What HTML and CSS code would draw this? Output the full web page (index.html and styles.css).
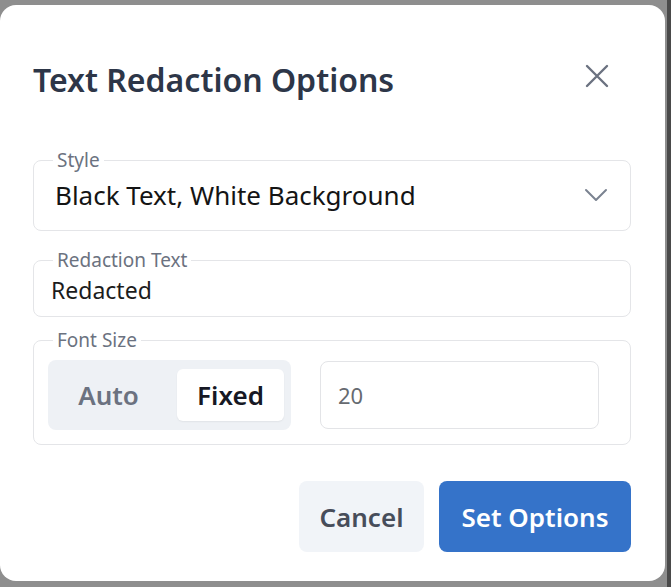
FILE: index.html
```html
<!DOCTYPE html>
<html>
<head>
<meta charset="utf-8">
<link rel="stylesheet" href="styles.css">
</head>
<body>
<div class="dialog">
  <div class="header">
    <h1 class="title">Text Redaction Options</h1>
    <button class="close" aria-label="Close">
      <svg width="24" height="24" viewBox="0 0 24 24"><path d="M2 2 L22 22 M22 2 L2 22" stroke="#6b7280" stroke-width="2.4" stroke-linecap="round" fill="none"/></svg>
    </button>
  </div>
  <fieldset class="field field-style">
    <legend>Style</legend>
    <div class="select-row">
      <span class="select-value">Black Text, White Background</span>
      <svg class="chev" width="24" height="14" viewBox="0 0 24 14"><path d="M2 2 L12 12 L22 2" stroke="#7b8391" stroke-width="2" stroke-linecap="round" stroke-linejoin="round" fill="none"/></svg>
    </div>
  </fieldset>
  <fieldset class="field field-text">
    <legend>Redaction Text</legend>
    <div class="text-value">Redacted</div>
  </fieldset>
  <fieldset class="field field-size">
    <legend>Font Size</legend>
    <div class="size-row">
      <div class="segmented">
        <div class="seg">Auto</div>
        <div class="seg seg-active">Fixed</div>
      </div>
      <div class="num-input">20</div>
    </div>
  </fieldset>
  <div class="actions">
    <button class="btn btn-cancel">Cancel</button>
    <button class="btn btn-primary">Set Options</button>
  </div>
</div>
</body>
</html>
```

FILE: styles.css
```css
html, body {
  margin: 0;
  padding: 0;
}
body {
  width: 671px;
  height: 587px;
  overflow: hidden;
  background: linear-gradient(to right, #8e8e8e 0, #8e8e8e 667px, #4a4a4a 667px);
  font-family: "Noto Sans", "Open Sans", sans-serif;
  padding-top: 5px;
  box-sizing: border-box;
}
.dialog {
  width: 665px;
  height: 576px;
  box-sizing: border-box;
  background: #ffffff;
  border-radius: 16px;
  padding: 55px 34px 0 33px;
  display: flex;
  flex-direction: column;
}
.header {
  display: flex;
  align-items: center;
  justify-content: space-between;
  height: 40px;
  margin-bottom: 50px;
}
.title {
  margin: 0;
  font-size: 32px;
  line-height: 40px;
  font-weight: 600;
  color: #2d3648;
  letter-spacing: 0;
}
.close {
  border: none;
  background: none;
  padding: 0;
  width: 24px;
  height: 24px;
  margin-right: 22px;
  margin-top: -8px;
  display: flex;
}
.field {
  margin: 0;
  border: 1px solid #e4e5e8;
  border-radius: 8px;
  padding: 0 20px 0 20px;
  min-width: 0;
}
.field legend {
  padding: 0 4px;
  font-size: 19px;
  line-height: 20px;
  color: #6b7280;
}
.field-style {
  height: 81px;
  box-sizing: border-box;
  padding-left: 21px;
  padding-right: 22px;
}
.field-style legend {
  margin-left: -2px;
}
.select-row {
  display: flex;
  align-items: center;
  justify-content: space-between;
  height: 50px;
}
.select-value {
  font-size: 26px;
  color: #141414;
  line-height: 32px;
}
.field-text {
  margin-top: 19px;
  height: 67px;
  box-sizing: border-box;
  padding-left: 17px;
}
.field-text legend {
  margin-left: 2px;
}
.text-value {
  font-size: 23px;
  line-height: 30px;
  color: #1c1c1c;
  padding-top: 5px;
}
.field-size {
  margin-top: 13px;
  height: 115px;
  box-sizing: border-box;
  padding: 0 31px 0 14px;
}
.field-size legend {
  margin-left: 5px;
}
.size-row {
  display: flex;
  gap: 29px;
  padding-top: 10px;
}
.segmented {
  display: flex;
  gap: 15px;
  padding: 9px 7px;
  background: #eef1f5;
  border-radius: 8px;
  width: 243px;
  box-sizing: border-box;
  height: 70px;
}
.seg {
  width: 107px;
  height: 52px;
  display: flex;
  align-items: center;
  justify-content: center;
  font-size: 26px;
  font-weight: 600;
  color: #6b7280;
  border-radius: 6px;
}
.seg-active {
  background: #ffffff;
  color: #161824;
  box-shadow: 0 1px 2px rgba(0,0,0,0.06);
}
.num-input {
  flex: 1;
  height: 68px;
  margin-top: 1px;
  box-sizing: border-box;
  border: 1px solid #e3e4e7;
  border-radius: 8px;
  display: flex;
  align-items: center;
  padding-left: 17px;
  font-size: 22px;
  color: #666a70;
}
.actions {
  display: flex;
  justify-content: flex-end;
  gap: 15px;
  margin-top: 36px;
}
.btn {
  height: 71px;
  border: none;
  border-radius: 8px;
  font-family: "Noto Sans", "Open Sans", sans-serif;
  font-size: 26px;
  font-weight: 600;
  padding: 0;
}
.btn-cancel {
  width: 125px;
  background: #f1f4f8;
  color: #474d5a;
}
.btn-primary {
  width: 192px;
  background: #3573c9;
  color: #ffffff;
}
```
